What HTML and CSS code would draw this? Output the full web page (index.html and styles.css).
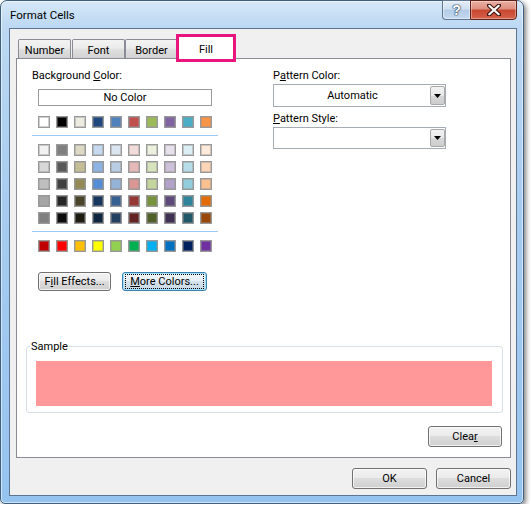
FILE: index.html
```html
<!DOCTYPE html>
<html>
<head>
<meta charset="utf-8">
<title>Format Cells</title>
<link rel="stylesheet" href="styles.css">
</head>
<body>
<div class="window">
  <div class="titlebar">
    <span class="title">Format Cells</span>
    <div class="caption">
      <div class="cap-btn help">?</div>
      <div class="cap-btn close">
        <svg width="14" height="12" viewBox="0 0 14 12"><path d="M2 1.5 L12 10.5 M12 1.5 L2 10.5" stroke="#3a1510" stroke-width="4.2" stroke-linecap="round"/><path d="M2.3 1.8 L11.7 10.2 M11.7 1.8 L2.3 10.2" stroke="#fff" stroke-width="2.2" stroke-linecap="round"/></svg>
      </div>
    </div>
  </div>
  <div class="client">
    <div class="tabs">
      <div class="tab t-number">Number</div>
      <div class="tab t-font">Font</div>
      <div class="tab t-border">Border</div>
      <div class="tab t-fill selected">Fill</div>
      <div class="highlight"></div>
    </div>
    <div class="panel">
      <div class="top">
        <div class="left">
          <div class="label">Background <u>C</u>olor:</div>
          <div class="nocolor">No Color</div>
          <div class="swrow">
            <span class="sw" style="background:#ffffff"></span><span class="sw" style="background:#000000"></span><span class="sw" style="background:#eeece1"></span><span class="sw" style="background:#1f497d"></span><span class="sw" style="background:#4f81bd"></span><span class="sw" style="background:#c0504d"></span><span class="sw" style="background:#9bbb59"></span><span class="sw" style="background:#8064a2"></span><span class="sw" style="background:#4bacc6"></span><span class="sw" style="background:#f79646"></span>
          </div>
          <div class="sep"></div>
          <div class="grid">
            <span class="sw" style="background:#f2f2f2"></span><span class="sw" style="background:#7f7f7f"></span><span class="sw" style="background:#ddd9c3"></span><span class="sw" style="background:#c6d9f0"></span><span class="sw" style="background:#dbe5f1"></span><span class="sw" style="background:#f2dcdb"></span><span class="sw" style="background:#ebf1dd"></span><span class="sw" style="background:#e5e0ec"></span><span class="sw" style="background:#dbeef3"></span><span class="sw" style="background:#fdeada"></span>
            <span class="sw" style="background:#d8d8d8"></span><span class="sw" style="background:#595959"></span><span class="sw" style="background:#c4bd97"></span><span class="sw" style="background:#8db3e2"></span><span class="sw" style="background:#b8cce4"></span><span class="sw" style="background:#e5b9b7"></span><span class="sw" style="background:#d7e3bc"></span><span class="sw" style="background:#ccc1d9"></span><span class="sw" style="background:#b7dde8"></span><span class="sw" style="background:#fbd5b5"></span>
            <span class="sw" style="background:#bfbfbf"></span><span class="sw" style="background:#3f3f3f"></span><span class="sw" style="background:#938953"></span><span class="sw" style="background:#548dd4"></span><span class="sw" style="background:#95b3d7"></span><span class="sw" style="background:#d99694"></span><span class="sw" style="background:#c3d69b"></span><span class="sw" style="background:#b2a2c7"></span><span class="sw" style="background:#92cddc"></span><span class="sw" style="background:#fac08f"></span>
            <span class="sw" style="background:#a5a5a5"></span><span class="sw" style="background:#262626"></span><span class="sw" style="background:#494429"></span><span class="sw" style="background:#17365d"></span><span class="sw" style="background:#366092"></span><span class="sw" style="background:#953734"></span><span class="sw" style="background:#76923c"></span><span class="sw" style="background:#5f497a"></span><span class="sw" style="background:#31859b"></span><span class="sw" style="background:#e36c09"></span>
            <span class="sw" style="background:#7f7f7f"></span><span class="sw" style="background:#0c0c0c"></span><span class="sw" style="background:#1d1b10"></span><span class="sw" style="background:#0f243e"></span><span class="sw" style="background:#244061"></span><span class="sw" style="background:#632423"></span><span class="sw" style="background:#4f6128"></span><span class="sw" style="background:#3f3151"></span><span class="sw" style="background:#205867"></span><span class="sw" style="background:#974806"></span>
          </div>
          <div class="sep"></div>
          <div class="swrow std">
            <span class="sw" style="background:#c00000"></span><span class="sw" style="background:#ff0000"></span><span class="sw" style="background:#ffc000"></span><span class="sw" style="background:#ffff00"></span><span class="sw" style="background:#92d050"></span><span class="sw" style="background:#00b050"></span><span class="sw" style="background:#00b0f0"></span><span class="sw" style="background:#0070c0"></span><span class="sw" style="background:#002060"></span><span class="sw" style="background:#7030a0"></span>
          </div>
          <div class="btnrow">
            <button class="btn fill-eff">F<u>i</u>ll Effects...</button>
            <button class="btn more"><span class="focus"><u>M</u>ore Colors...</span></button>
          </div>
        </div>
        <div class="right">
          <div class="label">P<u>a</u>ttern Color:</div>
          <div class="combo">
            <span class="val">Automatic</span>
            <span class="drop"><svg width="7" height="4" viewBox="0 0 7 4"><path d="M0 0 H7 L3.5 4 Z" fill="#000"/></svg></span>
          </div>
          <div class="label ps"><u>P</u>attern Style:</div>
          <div class="combo c2">
            <span class="val"></span>
            <span class="drop"><svg width="7" height="4" viewBox="0 0 7 4"><path d="M0 0 H7 L3.5 4 Z" fill="#000"/></svg></span>
          </div>
        </div>
      </div>
      <fieldset class="sample">
        <legend>Sample</legend>
        <div class="preview"></div>
      </fieldset>
      <div class="clear-row"><button class="btn clear">Clea<u>r</u></button></div>
    </div>
    <div class="footer">
      <button class="btn ok">OK</button>
      <button class="btn cancel">Cancel</button>
    </div>
  </div>
</div>
</body>
</html>
```

FILE: styles.css
```css
* { box-sizing: border-box; }
html, body { margin: 0; padding: 0; background: #ffffff; }
body {
  font-family: Roboto, "Liberation Sans", sans-serif;
  font-size: 11px;
  line-height: 15px;
  color: #000;
}

.window {
  width: 524px;
  height: 504px;
  border: 1px solid #3f5f80;
  border-radius: 7px 7px 5px 5px;
  background: linear-gradient(180deg, #d6e8f8 0, #bcd8f3 26px, #a8ccf0 40%, #95c3f0 100%);
  padding: 0 6px 7px 8px;
  display: flex;
  flex-direction: column;
  box-shadow: inset 0 0 0 1px rgba(255,255,255,.55), 2px 2px 5px rgba(0,0,0,.5);
}

.titlebar {
  height: 27px;
  flex: none;
  display: flex;
  justify-content: space-between;
  align-items: flex-start;
}
.title { padding: 7px 0 0 1px; font-size: 11.5px; }

.caption { display: flex; margin-top: -1px; }
.cap-btn {
  height: 20px;
  display: flex;
  align-items: center;
  justify-content: center;
}
.help {
  width: 28px;
  border: 1px solid #5f7590;
  border-right: none;
  border-radius: 0 0 0 4px;
  background: linear-gradient(180deg, #e4edf7 0, #cfdff0 45%, #b3cbe6 50%, #c5daf0 100%);
  box-shadow: inset 0 0 0 1px rgba(255,255,255,.45);
  color: #fff;
  font: bold 14px "Liberation Sans", sans-serif;
  text-shadow: 0 0 1px #20384f, 0 0 1px #20384f, 0 0 2px #20384f;
}
.close {
  width: 47px;
  border: 1px solid #5c2119;
  border-radius: 0 0 4px 0;
  background: linear-gradient(180deg, #eab0a4 0, #dc8d7d 45%, #c8462f 50%, #d4624a 100%);
  box-shadow: inset 0 0 0 1px rgba(255,255,255,.35);
}

.client {
  flex: 1;
  border: 1px solid #5d7590;
  background: #f0f0f0;
  padding: 7px 5px 0 6px;
  display: flex;
  flex-direction: column;
}

.tabs {
  position: relative;
  height: 22px;
  flex: none;
  display: flex;
  align-items: flex-end;
  padding-left: 2px;
}
.tab {
  height: 19px;
  width: 53px;
  border: 1px solid #898c95;
  border-bottom: none;
  border-radius: 2px 2px 0 0;
  background: linear-gradient(180deg, #f3f3f3 0, #ebebeb 45%, #dedede 55%, #d2d2d2 100%);
  text-align: center;
  padding-top: 3px;
}
.t-font { margin-left: 1px; }
.tab.selected {
  position: relative;
  z-index: 2;
  width: 58px;
  height: 23px;
  margin-left: -1px;
  margin-bottom: -1px;
  background: #fff;
  padding-top: 5px;
}
.highlight {
  position: absolute;
  left: 160px;
  top: -2px;
  width: 60px;
  height: 28px;
  border: 3px solid #e8157f;
  z-index: 3;
}

.panel {
  position: relative;
  z-index: 1;
  height: 400px;
  flex: none;
  border: 1px solid #898c95;
  background: #fff;
  padding: 9px 7px 0 9px;
}
.top { display: flex; padding-left: 6px; }
.left { width: 186px; }
.right { margin-left: 55px; width: 173px; }

.label { height: 15px; white-space: nowrap; }
.nocolor {
  margin: 6px 0 0 6px;
  width: 174px;
  height: 17px;
  border: 1px solid #9a9a9a;
  text-align: center;
  line-height: 15px;
}
.swrow { display: flex; gap: 6px; margin: 10px 0 0 6px; }
.swrow.std { margin-top: 8px; }
.sw {
  display: block;
  width: 12px;
  height: 12px;
  border: 1px solid #999999;
  box-shadow: inset 0 0 0 1px rgba(150,150,150,.45);
}
.sep { height: 1px; background: #9dc9f2; margin-top: 7px; }
.grid {
  display: grid;
  grid-template-columns: repeat(10, 12px);
  column-gap: 6px;
  row-gap: 5px;
  margin: 8px 0 0 6px;
}
.btnrow { display: flex; gap: 11px; margin: 20px 0 0 6px; }

.btn {
  font-family: inherit;
  font-size: 11px;
  height: 21px;
  border: 1px solid #707070;
  border-radius: 3px;
  background: linear-gradient(180deg, #f2f2f2 0, #ebebeb 45%, #dddddd 50%, #cfcfcf 100%);
  box-shadow: inset 0 0 0 1px rgba(255,255,255,.7);
  padding: 0;
  color: #000;
  line-height: 17px;
}
.fill-eff { width: 73px; height: 19px; line-height: 15px; }
.more {
  width: 85px;
  height: 19px;
  border-color: #3c7fb1;
  box-shadow: inset 0 0 0 1px #9fe0fb;
  background: linear-gradient(180deg, #f0f7fb 0, #e6eff5 45%, #d5e3ec 50%, #c8dae6 100%);
}
.focus {
  display: block;
  margin: 1px 2px;
  border: 1px dotted #000;
  line-height: 13px;
}

.combo {
  margin-top: 1px;
  height: 23px;
  border: 1px solid #a5acb5;
  background: #fff;
  display: flex;
  padding: 1px 0 1px 1px;
}
.combo.c2 { height: 22px; }
.val { flex: 1; text-align: center; line-height: 19px; }
.drop {
  width: 15px;
  border: 1px solid #a8a8a8;
  border-radius: 2px;
  background: linear-gradient(180deg, #f2f2f2 0, #e8e8e8 50%, #d8d8d8 51%, #cdcdcd 100%);
  display: flex;
  align-items: center;
  justify-content: center;
}
.label.ps { margin-top: 4px; }

.sample {
  margin: 48px 0 0 0;
  border: 1px solid #d5dfe5;
  border-radius: 3px;
  padding: 7px 10px 6px 9px;
  min-width: 0;
}
.sample legend { padding: 0 1px; margin-left: -6px; line-height: 15px; }
.preview { height: 45px; background: #ff9999; }

.clear-row { display: flex; justify-content: flex-end; margin-top: 13px; padding-right: 1px; }
.clear { width: 74px; }

.footer {
  display: flex;
  justify-content: flex-end;
  gap: 9px;
  margin-top: 10px;
}
.ok, .cancel { width: 75px; }
```
